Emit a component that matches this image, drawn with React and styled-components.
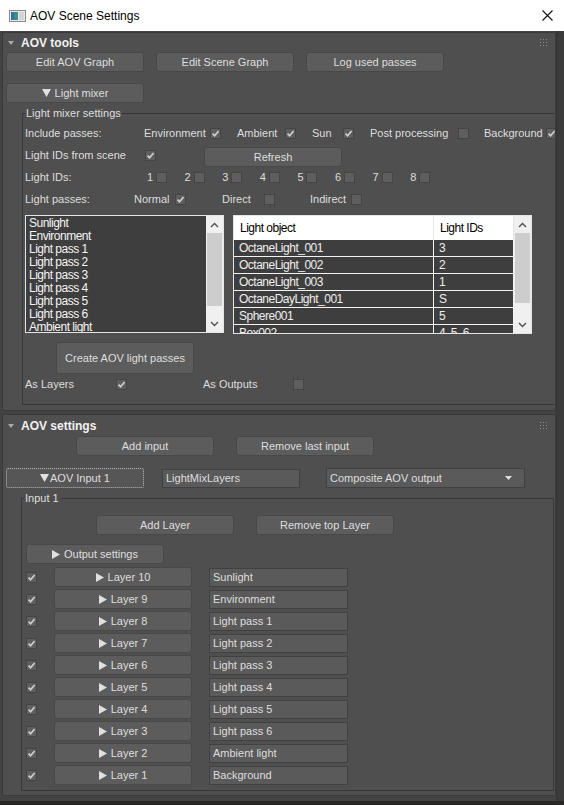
import styled, { createGlobalStyle } from "styled-components";

const GlobalStyle = createGlobalStyle`
  html, body {
    margin: 0;
    padding: 0;
    background: #434343;
  }
  body {
    color: #dedede;
    font-family: "Liberation Sans", Arial, sans-serif;
    font-size: 11px;
  }
  * {
    box-sizing: border-box;
  }
`;

const includePasses = [
  { label: 'Environment', w: 93, lw: 66, on: true },
  { label: 'Ambient', w: 75, lw: 48, on: true },
  { label: 'Sun', w: 58, lw: 31, on: true },
  { label: 'Post processing', w: 114, lw: 88, on: false },
  { label: 'Background', w: 72, lw: 62, on: true }
];

const lightPasses = [
  { label: 'Normal', w: 88, lw: 41, on: true },
  { label: 'Direct', w: 88, lw: 42, on: false },
  { label: 'Indirect', w: 60, lw: 41, on: false }
];

const passNames = [
  'Sunlight', 'Environment', 'Light pass 1', 'Light pass 2', 'Light pass 3',
  'Light pass 4', 'Light pass 5', 'Light pass 6', 'Ambient light', 'Background'
];

const lightObjects = [
  ['OctaneLight_001', '3'],
  ['OctaneLight_002', '2'],
  ['OctaneLight_003', '1'],
  ['OctaneDayLight_001', 'S'],
  ['Sphere001', '5'],
  ['Box002', '4, 5, 6']
];

const Check = ({ on }) => (
  <CheckBox>
    {on && (
      <svg width="9" height="9" viewBox="0 0 9 9">
        <path d="M1.5 4.6 L3.6 6.8 L7.6 2" fill="none" stroke="#cfcfcf" strokeWidth="1.7" />
      </svg>
    )}
  </CheckBox>
);

const Caret = () => (
  <svg width="6" height="4" viewBox="0 0 6 4">
    <path d="M0 0 H6 L3 4 Z" fill="#a8a8a8" />
  </svg>
);

const Grip = () => (
  <GripIcon width="7" height="7" viewBox="0 0 7 7">
    {[0, 3, 6].map(y => [0, 3, 6].map(x => (
      <rect key={`${x}-${y}`} x={x} y={y} width="1" height="1" fill="#8d8d8d" />
    )))}
  </GripIcon>
);

const Down = ({ w = 9, h = 8 }) => (
  <svg width={w} height={h} viewBox="0 0 9 8" preserveAspectRatio="none">
    <path d="M0 0 H9 L4.5 8 Z" fill="#e0e0e0" />
  </svg>
);

const Play = () => (
  <svg width="8" height="9" viewBox="0 0 8 9">
    <path d="M0 0 L8 4.5 L0 9 Z" fill="#e0e0e0" />
  </svg>
);

const Chevron = ({ up }) => (
  <svg width="9" height="6" viewBox="0 0 9 6">
    <path d={up ? 'M1 5 L4.5 1.5 L8 5' : 'M1 1 L4.5 4.5 L8 1'} fill="none" stroke="#505050" strokeWidth="1.4" />
  </svg>
);

const Scroll = ({ thumb }) => (
  <ScrollBar>
    <ScrollArrow><Chevron up /></ScrollArrow>
    <ScrollTrack>
      <Thumb style={{ height: thumb }} />
    </ScrollTrack>
    <ScrollArrow><Chevron /></ScrollArrow>
  </ScrollBar>
);

const Rollout1 = () => (
  <Rollout>
    <RolloutHeader h={19}>
      <Caret />
      <RolloutTitle>AOV tools</RolloutTitle>
      <Grip />
    </RolloutHeader>

    <ButtonRow pl={2} gap={12}>
      <Button>Edit AOV Graph</Button>
      <Button>Edit Scene Graph</Button>
      <Button>Log used passes</Button>
    </ButtonRow>

    <ButtonRow pl={2} mt={11}>
      <Button><Down /> Light mixer</Button>
    </ButtonRow>

    <Group ml={18} w={536} mt={3} pb={10} pl={2}>
      <Legend>Light mixer settings</Legend>

      <Row mt={3}>
        <Label w={119}>Include passes:</Label>
        {includePasses.map(p => (
          <Option key={p.label} w={p.w}>
            <Label w={p.lw}>{p.label}</Label>
            <Check on={p.on} />
          </Option>
        ))}
      </Row>

      <Row h={24}>
        <Label w={120}>Light IDs from scene</Label>
        <Check on />
        <Button w={138} mt={4} ml={48}>Refresh</Button>
      </Row>

      <Row>
        <Label w={122}>Light IDs:</Label>
        {[1, 2, 3, 4, 5, 6, 7, 8].map(n => (
          <Option key={n} w={37.6}>
            <Label w={9}>{n}</Label>
            <Check />
          </Option>
        ))}
      </Row>

      <Row mt={2}>
        <Label w={109}>Light passes:</Label>
        {lightPasses.map(p => (
          <Option key={p.label} w={p.w}>
            <Label w={p.lw}>{p.label}</Label>
            <Check on={p.on} />
          </Option>
        ))}
      </Row>

      <ListsRow>
        <ListBox>
          <ListItems>
            {passNames.slice(0, 9).map(name => <ListItem key={name}>{name}</ListItem>)}
          </ListItems>
          <Scroll thumb={73} />
        </ListBox>

        <Table>
          <TableBody>
            <HeadRow>
              <HeadCell w={200}>Light object</HeadCell>
              <HeadCell>Light IDs</HeadCell>
            </HeadRow>
            {lightObjects.map(([name, ids]) => (
              <DataRow key={name}>
                <DataCell w={200}>{name}</DataCell>
                <DataCell>{ids}</DataCell>
              </DataRow>
            ))}
          </TableBody>
          <Scroll thumb={70} />
        </Table>
      </ListsRow>

      <Button w={138} h={32} ml={31} mt={8}>Create AOV light passes</Button>

      <Row>
        <Label w={91}>As Layers</Label>
        <Check on />
        <Label w={90} ml={76}>As Outputs</Label>
        <Check />
      </Row>
    </Group>
  </Rollout>
);

const Rollout2 = () => (
  <Rollout mt={3}>
    <RolloutHeader h={21}>
      <Caret />
      <RolloutTitle>AOV settings</RolloutTitle>
      <Grip />
    </RolloutHeader>

    <ButtonRow pl={72} gap={22}>
      <Button>Add input</Button>
      <Button>Remove last input</Button>
    </ButtonRow>

    <Row mt={12}>
      <FocusButton><Down />AOV Input 1</FocusButton>
      <TextField w={138} ml={18}>LightMixLayers</TextField>
      <Dropdown>
        Composite AOV output
        <Down w={7} h={4} />
      </Dropdown>
    </Row>

    <Group ml={17} w={533} mt={3} pb={5} pl={4} mb={4}>
      <Legend ml={-2}>Input 1</Legend>

      <ButtonRow pl={70} gap={22} mt={10}>
        <Button>Add Layer</Button>
        <Button>Remove top Layer</Button>
      </ButtonRow>

      <ButtonRow mt={9}>
        <Button><Play /> Output settings</Button>
      </ButtonRow>

      <Layers>
        {passNames.map((name, i) => (
          <Row key={name} mt={0}>
            <Check on />
            <Button ml={17}><Play /> Layer {10 - i}</Button>
            <TextField w={139} ml={17}>{name}</TextField>
          </Row>
        ))}
      </Layers>
    </Group>
  </Rollout>
);

export default function App() {
  return (
    <>
      <GlobalStyle />
      <Window>
        <TitleBar>
          <svg width="17" height="12" viewBox="0 0 17 12">
            <rect x="0.5" y="0.5" width="16" height="11" fill="#e8e8e8" stroke="#8a8a8a" />
            <rect x="2" y="2" width="7" height="8" fill="#3f8f86" />
            <rect x="2" y="2" width="3" height="8" fill="#3a6fa5" />
            <rect x="10" y="2" width="5" height="8" fill="#cfd5d8" />
          </svg>
          <WindowTitle>AOV Scene Settings</WindowTitle>
          <svg width="11" height="11" viewBox="0 0 11 11">
            <path d="M0.5 0.5 L10.5 10.5 M10.5 0.5 L0.5 10.5" stroke="#111" strokeWidth="1.1" />
          </svg>
        </TitleBar>

        <Body>
          <Panels>
            <Rollout1 />
            <Rollout2 />
          </Panels>
          <SideStrip />
        </Body>
        <BottomEdge />
      </Window>
    </>
  );
}

const Window = styled.div`
  display: flex;
  flex-direction: column;
  height: 805px;
  overflow: hidden;
  width: 564px;
`;

const TitleBar = styled.div`
  align-items: center;
  background: #ffffff;
  color: #000000;
  display: flex;
  flex-shrink: 0;
  font-size: 12px;
  height: 31px;
  padding: 0 11px 0 9px;
`;

const WindowTitle = styled.div`
  flex: 1;
  margin-left: 4px;
`;

const Body = styled.div`
  display: flex;
  flex: 1;
  min-height: 0;
`;

const Panels = styled.div`
  display: flex;
  flex-direction: column;
  padding: 1px 0 0 2px;
  width: 556px;
`;

const SideStrip = styled.div`
  background: #3b3b3b;
  border-left: 1px solid #353535;
  flex: 1;
`;

const BottomEdge = styled.div`
  background: #2a2727;
  flex-shrink: 0;
  height: 4px;
`;

const Rollout = styled.section`
  background: #4f4f4f;
  border: 1px solid #3a3a3a;
  border-radius: 2px;
  margin-top: ${({ mt = 0 }) => mt}px;
  overflow: hidden;
  padding-left: 1px;
  width: 554px;
`;

const RolloutHeader = styled.div`
  align-items: center;
  display: flex;
  height: ${({ h }) => h}px;
  padding-left: 4px;
`;

const RolloutTitle = styled.div`
  color: #f2f2f2;
  font-size: 12px;
  font-weight: bold;
  margin-left: 7px;
`;

const GripIcon = styled.svg`
  margin-left: auto;
  margin-right: 8px;
`;

const ButtonRow = styled.div`
  display: flex;
  gap: ${({ gap = 0 }) => gap}px;
  margin-top: ${({ mt = 0 }) => mt}px;
  padding-left: ${({ pl = 0 }) => pl}px;
`;

const Button = styled.button`
  align-items: center;
  background: #5c5c5c;
  border: 1px solid #484848;
  border-radius: 3px;
  color: #dedede;
  display: flex;
  flex-shrink: 0;
  font-family: inherit;
  font-size: 11px;
  gap: 4px;
  height: ${({ h = 20 }) => h}px;
  justify-content: center;
  margin: ${({ mt = 0 }) => mt}px 0 0 ${({ ml = 0 }) => ml}px;
  padding: 0;
  width: ${({ w = 138 }) => w}px;
`;

const FocusButton = styled(Button)`
  background: #565656;
  border: 1px dotted #b8b8b8;
  border-radius: 2px;
  gap: 1px;
  margin-left: 2px;
`;

const TextField = styled.div`
  align-items: center;
  background: #5a5a5a;
  border: 1px solid #414141;
  display: flex;
  flex-shrink: 0;
  height: 19px;
  margin-left: ${({ ml = 0 }) => ml}px;
  padding-left: 3px;
  width: ${({ w }) => w}px;
`;

const Dropdown = styled(TextField)`
  height: 20px;
  justify-content: space-between;
  margin-left: 26px;
  padding-right: 12px;
  width: 199px;
`;

const Group = styled.fieldset`
  border: 1px solid #383838;
  margin: ${({ mt = 0 }) => mt}px 0 ${({ mb = 5 }) => mb}px ${({ ml }) => ml}px;
  min-width: 0;
  padding: 0 0 ${({ pb }) => pb}px ${({ pl }) => pl}px;
  width: ${({ w }) => w}px;
`;

const Legend = styled.legend`
  line-height: 14px;
  margin-left: ${({ ml = 0 }) => ml}px;
  padding: 0 1px;
`;

const Row = styled.div`
  align-items: center;
  display: flex;
  height: ${({ h = 20 }) => h}px;
  margin-top: ${({ mt = 0 }) => mt}px;
  white-space: nowrap;
`;

const Label = styled.span`
  flex-shrink: 0;
  margin-left: ${({ ml = 0 }) => ml}px;
  width: ${({ w }) => w}px;
`;

const Option = styled.div`
  align-items: center;
  display: flex;
  flex-shrink: 0;
  width: ${({ w }) => w}px;
`;

const CheckBox = styled.span`
  align-items: center;
  background: #5e5e5e;
  border: 1px solid #454545;
  display: flex;
  flex-shrink: 0;
  height: 11px;
  justify-content: center;
  width: 11px;
`;

const ListsRow = styled.div`
  align-items: flex-start;
  display: flex;
  gap: 9px;
  margin-top: 6px;
`;

const ListBox = styled.div`
  background: #3e3e3e;
  border: 1px solid #e4e4e4;
  display: flex;
  height: 118px;
  width: 199px;
`;

const ListItems = styled.div`
  flex: 1;
  overflow: hidden;
  padding: 1px 0 0 3px;
`;

const ListItem = styled.div`
  color: #f4f4f4;
  font-size: 12px;
  letter-spacing: -0.5px;
  line-height: 13px;
  white-space: nowrap;
`;

const ScrollBar = styled.div`
  background: #f0f0f0;
  display: flex;
  flex-direction: column;
  width: 17px;
`;

const ScrollArrow = styled.div`
  align-items: center;
  display: flex;
  height: 17px;
  justify-content: center;
`;

const ScrollTrack = styled.div`
  flex: 1;
`;

const Thumb = styled.div`
  background: #cdcdcd;
  margin: 0 1px;
`;

const Table = styled.div`
  background: #3e3e3e;
  border: 1px solid #e4e4e4;
  display: flex;
  height: 119px;
  width: 299px;
`;

const TableBody = styled.div`
  flex: 1;
  overflow: hidden;
`;

const HeadRow = styled.div`
  background: #ffffff;
  color: #000000;
  display: flex;
  height: 24px;
`;

const HeadCell = styled.div`
  align-items: center;
  border-right: 1px solid #e5e5e5;
  display: flex;
  flex: ${({ w }) => (w ? `0 0 ${w}px` : 1)};
  font-size: 12px;
  letter-spacing: -0.5px;
  padding-left: 6px;
`;

const DataRow = styled.div`
  border-bottom: 1px solid #f2f2f2;
  display: flex;
  height: 17px;
`;

const DataCell = styled.div`
  align-items: center;
  border-right: 1px solid #f2f2f2;
  color: #eeeeee;
  display: flex;
  flex: ${({ w }) => (w ? `0 0 ${w}px` : 1)};
  font-size: 12px;
  letter-spacing: -0.5px;
  padding-left: 5px;
  white-space: nowrap;
`;

const Layers = styled.div`
  display: flex;
  flex-direction: column;
  gap: 2px;
  margin-top: 3px;
`;
